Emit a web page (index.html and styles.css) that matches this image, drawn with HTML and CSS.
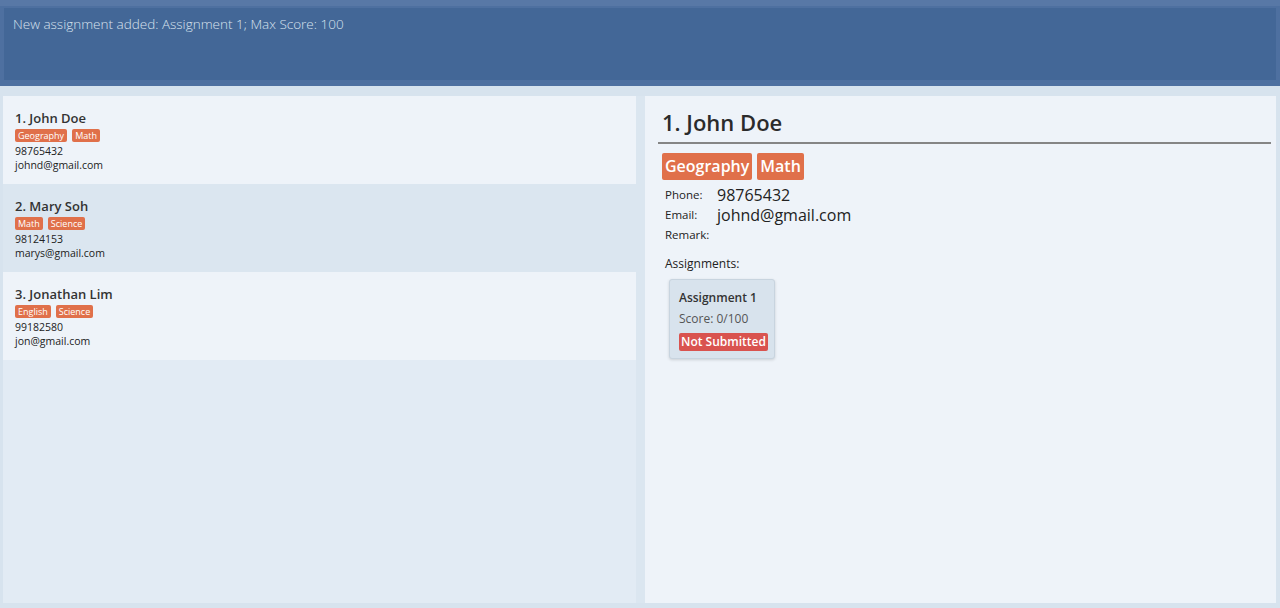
FILE: index.html
```html
<!DOCTYPE html>
<html>
<head>
<meta charset="utf-8">
<link rel="stylesheet" href="styles.css">
</head>
<body>
<div class="app">
  <div class="header">
    <div class="result">New assignment added: Assignment 1; Max Score: 100</div>
  </div>
  <div class="main">
    <div class="list">
      <div class="card odd">
        <div class="name">1. John Doe</div>
        <div class="tags"><span class="tag">Geography</span><span class="tag">Math</span></div>
        <div class="line">98765432</div>
        <div class="line">johnd@gmail.com</div>
      </div>
      <div class="card even">
        <div class="name">2. Mary Soh</div>
        <div class="tags"><span class="tag">Math</span><span class="tag">Science</span></div>
        <div class="line">98124153</div>
        <div class="line">marys@gmail.com</div>
      </div>
      <div class="card odd">
        <div class="name">3. Jonathan Lim</div>
        <div class="tags"><span class="tag">English</span><span class="tag">Science</span></div>
        <div class="line">99182580</div>
        <div class="line">jon@gmail.com</div>
      </div>
    </div>
    <div class="divider"></div>
    <div class="detail">
      <div class="d-name">1. John Doe</div>
      <div class="d-tags"><span class="d-tag">Geography</span><span class="d-tag">Math</span></div>
      <div class="fields">
        <div class="label">Phone:</div><div class="value">98765432</div>
        <div class="label">Email:</div><div class="value">johnd@gmail.com</div>
        <div class="label">Remark:</div><div class="value"></div>
      </div>
      <div class="asg-title">Assignments:</div>
      <div class="asg-card">
        <div class="asg-name">Assignment 1</div>
        <div class="asg-score">Score: 0/100</div>
        <span class="badge">Not Submitted</span>
      </div>
    </div>
  </div>
</div>
</body>
</html>
```
FILE: styles.css
```css
html, body {
  margin: 0;
  padding: 0;
  height: 100%;
}
body {
  font-family: "Open Sans", "Noto Sans", sans-serif;
  background: #d7e3ee;
  color: #333;
}
.app {
  height: 608px;
  display: flex;
  flex-direction: column;
}
.header {
  background: #4e70a0;
  border-top: 6px solid #5878a6;
  padding: 2px 4px 6px 4px;
  height: 72px;
}
.result {
  background: #436797;
  height: 72px;
  padding: 7px 9px;
  box-sizing: border-box;
  color: #d8e2ee;
  font-size: 13.5px;
  font-weight: 300;
}
.main {
  flex: 1;
  display: flex;
  padding: 10px 4px 5px 3px;
  min-height: 0;
}
.list {
  width: 633px;
  background: #e2ebf4;
  display: flex;
  flex-direction: column;
}
.card {
  height: 88px;
  box-sizing: border-box;
  padding: 13px 12px 0 12px;
}
.odd { background: #eef3f9; }
.even { background: #dbe6f0; }
.name {
  font-size: 13px;
  font-weight: 600;
  color: #333;
  line-height: 18px;
}
.tags {
  display: flex;
  gap: 5px;
  margin-top: 2px;
  margin-bottom: 2px;
}
.tag {
  background: #e0704a;
  color: #fff;
  font-size: 9px;
  line-height: 13px;
  padding: 0 3px;
  border-radius: 2px;
}
.line {
  font-size: 10.5px;
  line-height: 14px;
  color: #222;
}
.divider {
  width: 9px;
  background: #dbe6f0;
}
.detail {
  flex: 1;
  background: #eef3f9;
  padding: 11px 5px 0 13px;
}
.d-name {
  font-size: 22px;
  font-weight: 600;
  color: #2b2b2b;
  line-height: 30px;
  padding-left: 4px;
  border-bottom: 2px solid #858585;
  padding-bottom: 5px;
}
.d-tags {
  display: flex;
  gap: 5px;
  margin-top: 9px;
  padding-left: 4px;
}
.d-tag {
  background: #e0704a;
  color: #fff;
  font-size: 16px;
  font-weight: 600;
  line-height: 27px;
  padding: 0 3px;
  border-radius: 2px;
}
.fields {
  display: grid;
  grid-template-columns: 52px auto;
  grid-auto-rows: 20px;
  padding-left: 7px;
  margin-top: 7px;
  align-items: start;
}
.label {
  font-size: 11.5px;
  line-height: 16px;
  color: #222;
}
.value {
  font-size: 16px;
  line-height: 20px;
  color: #222;
  margin-top: -2px;
}
.asg-title {
  font-size: 12px;
  padding-left: 7px;
  margin-top: 8px;
  color: #222;
}
.asg-card {
  margin: 7px 0 0 11px;
  width: 106px;
  height: 80px;
  box-sizing: border-box;
  background: #d8e3ed;
  border: 1px solid #c8d4df;
  border-radius: 3px;
  box-shadow: 0 1px 3px rgba(0,0,0,0.15);
  padding: 9px 0 0 9px;
}
.asg-name {
  font-size: 12px;
  font-weight: 600;
  color: #333;
  line-height: 17px;
}
.asg-score {
  font-size: 12px;
  color: #555;
  line-height: 17px;
  margin-top: 4px;
}
.badge {
  display: inline-block;
  margin-top: 6px;
  background: #d9534f;
  color: #fff;
  font-size: 12px;
  font-weight: 600;
  line-height: 18px;
  padding: 0 2px;
  border-radius: 2px;
}
```
